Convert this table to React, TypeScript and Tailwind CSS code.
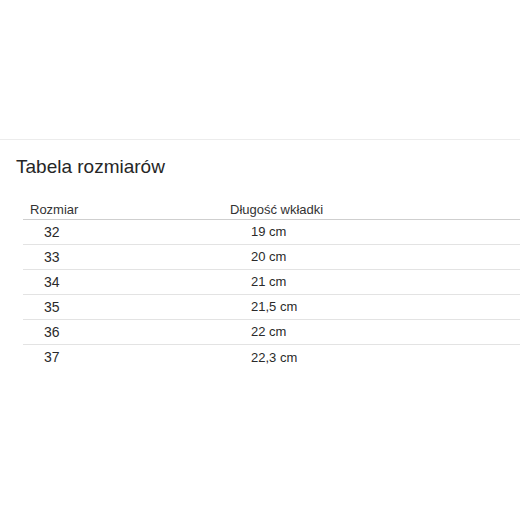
const rows = [
  ['32', '19 cm'],
  ['33', '20 cm'],
  ['34', '21 cm'],
  ['35', '21,5 cm'],
  ['36', '22 cm'],
  ['37', '22,3 cm'],
];

export default function App() {
  return (
    <div className="w-[520px] h-[520px] bg-white overflow-hidden text-[#2a2a2a] font-['Liberation_Sans',Arial,sans-serif]">
      <div className="mt-[139px] h-px bg-[#ececec]" />
      <h2 className="pt-[16px] pl-4 text-[19px] leading-[22px] text-[#262626]">Tabela rozmiarów</h2>
      <div className="mt-[15px] ml-[23px]">
        <div className="flex h-[27px] items-end border-b border-[#cfcfcf] text-[13px] text-[#333]">
          <div className="w-[200px] pl-[7px]">Rozmiar</div>
          <div className="pl-[7px]">Długość wkładki</div>
        </div>
        {rows.map(([size, len], i) => (
          <div
            key={size}
            className={
              'flex h-[25px] items-center text-[13px] ' +
              (i < rows.length - 1 ? 'border-b border-[#e3e3e3]' : '')
            }
          >
            <div className="w-[200px] pl-[21px] text-[14px]">{size}</div>
            <div className="pl-[28px]">{len}</div>
          </div>
        ))}
      </div>
    </div>
  );
}
